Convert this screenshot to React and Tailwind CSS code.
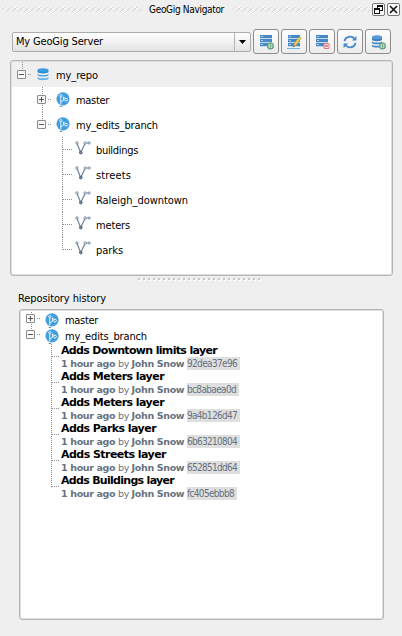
import React, { useLayoutEffect, useRef } from "react";

// Single-line label whose letter spacing is adjusted to fill the width `w`.
function Label({ w, className = "", children }) {
  const ref = useRef(null);
  useLayoutEffect(() => {
    const el = ref.current;
    el.style.letterSpacing = "0px";
    const natural = el.getBoundingClientRect().width;
    el.style.letterSpacing = (w - natural) / el.textContent.length + "px";
  }, [w]);
  return (
    <span ref={ref} className={"inline-block shrink-0 whitespace-pre " + className}>
      {children}
    </span>
  );
}

function Grip({ w, id }) {
  return (
    <svg width={w} height="6" className="shrink-0" shapeRendering="crispEdges">
      <defs>
        <pattern id={id} width="6" height="6" patternUnits="userSpaceOnUse">
          <path d="M0 0h2v2H0zM3 3h2v2H3z" fill="#fff" />
          <path d="M0 1h1v1H0zM1 0h1v1H1zM3 4h1v1H3zM4 3h1v1H4zM5 2h1v1H5z" fill="#cdcdcd" />
        </pattern>
      </defs>
      <rect width={w} height="6" fill={`url(#${id})`} />
    </svg>
  );
}

function Splitter() {
  return (
    <svg width="124" height="4" shapeRendering="crispEdges">
      {Array.from({ length: 25 }, (_, i) => (
        <g key={i}>
          <rect x={i * 5 + 1} y="1" width="2" height="2" fill="#fff" />
          <rect x={i * 5} y="0" width="2" height="2" fill="#c4c4c4" />
        </g>
      ))}
    </svg>
  );
}

const dots = { stroke: "#8f8f8f", strokeDasharray: "1 1", shapeRendering: "crispEdges", fill: "none" };

// Gutter of one tree row: dotted connectors and an optional expander box.
function Gutter({ w, h, cx, cy, end, top = true, bottom, box }) {
  return (
    <svg width={w} height={h} className="shrink-0">
      {top && <path d={`M${cx + 0.5} 0V${box ? cy - 4 : cy + 1}`} {...dots} />}
      {bottom && <path d={`M${cx + 0.5} ${cy + (box ? 6 : 0)}V${h}`} {...dots} />}
      <path d={`M${cx + (box ? 6 : 1)} ${cy + 0.5}H${end}`} {...dots} />
      {box && (
        <g fill="none" stroke="#8c8c8c">
          <rect x={cx - 4.5} y={cy - 3.5} width="8" height="8" rx="0.5" fill="#f8f8f8" />
          <path d={`M${cx - 3} ${cy + 0.5}h5`} stroke="#555" />
          {box === "+" && <path d={`M${cx - 0.5} ${cy - 2}v5`} stroke="#555" />}
        </g>
      )}
    </svg>
  );
}

function BranchIcon() {
  return (
    <svg width="14" height="15" viewBox="0 0 14 15" className="shrink-0">
      <circle cx="7" cy="6.8" r="6.6" fill="#419fdd" />
      <g fill="none" stroke="#e4f2fb" strokeWidth="1">
        <circle cx="4.8" cy="3.7" r="1.1" />
        <circle cx="10" cy="7.6" r="1.4" />
        <path d="M4.8 4.8v7.7M5 9.8l2.5-1.5V4.8M7.5 4.8l1.4 1.7" />
      </g>
      <path d="M3.6 14.3h2.6" stroke="#4b6c84" strokeWidth="0.9" />
    </svg>
  );
}

function RepoIcon() {
  return (
    <svg width="12" height="13" viewBox="0 0 12 13" className="shrink-0">
      <path d="M.5 2.2v1.6c0 2.2 11 2.2 11 0V2.2z" fill="#2e8bd0" />
      <ellipse cx="6" cy="2.1" rx="5.5" ry="1.9" fill="#3c9ce0" />
      <path d="M.5 5.4c0 2 11 2 11 0v1.7c0 2-11 2-11 0z" fill="#4ca5e3" />
      <path d="M.5 8.8c0 2 11 2 11 0v1.7c0 2.2-11 2.2-11 0z" fill="#65b1e6" />
    </svg>
  );
}

function LayerIcon() {
  return (
    <svg width="16" height="14" viewBox="0 0 16 14" className="shrink-0" fill="none" stroke="#718499">
      <path d="M2.2 2.8l3.3 8.4M6 11l3.8-8M11.5 2h2" strokeWidth="1.2" />
      <circle cx="1.9" cy="1.9" r="1.2" strokeWidth=".9" />
      <circle cx="10.2" cy="2" r="1.2" strokeWidth=".9" />
      <circle cx="14.2" cy="2" r="1.1" strokeWidth=".9" />
      <circle cx="5.8" cy="11.6" r="1.3" fill="#7f90a2" stroke="#465c75" />
    </svg>
  );
}

function Server() {
  return (
    <g>
      <path d="M1 0h12v3H1zM1 4h12v3H1zM1 8h12v3H1z" fill="#4788c6" />
      <path d="M1 3.5h12M1 7.5h12M1 11.5h12" stroke="#c4d9ee" />
      <path d="M2 1.5h2M2 5.5h2M2 9.5h2" stroke="#a9cdec" />
    </g>
  );
}

function Plus() {
  return (
    <g>
      <circle cx="11.5" cy="11" r="2.8" fill="#f4faf5" stroke="#64a277" strokeWidth="1.4" />
      <path d="M9.7 11h3.6M11.5 9.2v3.6" stroke="#6fae83" strokeWidth="1" />
    </g>
  );
}

const toolIcons = [
  <><Server /><Plus /></>,
  <>
    <Server />
    <path d="M0 13.5h13" stroke="#6eb4e9" />
    <path d="M6 12l1-3 5.2-7.2 2 1.4L9 10.4z" fill="#f2cf50" stroke="#a98d3d" strokeWidth=".6" />
    <path d="M6 12l.6-1.8 1.2.9z" fill="#444" />
  </>,
  <>
    <Server />
    <rect x="9" y="8.5" width="5" height="5" rx=".5" fill="#fff2f1" stroke="#e07577" />
    <path d="M10.2 9.7l2.6 2.6M12.8 9.7l-2.6 2.6" stroke="#d83e45" />
  </>,
  <g fill="none" stroke="#4589ca" strokeWidth="1.8">
    <path d="M1.5 6.2C2.2 1.5 8.4-.1 11.5 3.7M12.5 7.8C11.8 12.5 5.6 14.1 2.5 10.3" />
    <path d="M13.4 1v4.6H8.8zM.6 13V8.4h4.6z" fill="#4589ca" stroke="none" />
  </g>,
  <>
    <path d="M1 2.4v2c0 2.3 10 2.3 10 0v-2z" fill="#3b78b4" />
    <ellipse cx="6" cy="2.3" rx="5" ry="2" fill="#559bd9" />
    <path d="M1 6c0 2 10 2 10 0v1.8c0 2-10 2-10 0z" fill="#4788c6" />
    <path d="M1 9.3c0 2 10 2 10 0v1.6c0 2.2-10 2.2-10 0z" fill="#4788c6" />
    <Plus />
  </>,
];

const layers = [
  ["buildings", 42],
  ["streets", 35],
  ["Raleigh_downtown", 92],
  ["meters", 34],
  ["parks", 27],
];

const commits = [
  ["Adds Downtown limits layer", 156, "92dea37e96", 50],
  ["Adds Meters layer", 103, "bc8abaea0d", 49],
  ["Adds Meters layer", 103, "9a4b126d47", 50],
  ["Adds Parks layer", 95, "6b63210804", 50],
  ["Adds Streets layer", 105, "652851dd64", 50],
  ["Adds Buildings layer", 113, "fc405ebbb8", 47],
];

const panel = "flex flex-col rounded-[3px] border border-[#b5b5b5] bg-white shadow-[inset_0_0_0_1px_#dedede]";

export default function App() {
  return (
    <div className="flex h-[636px] w-[402px] flex-col overflow-hidden bg-[#efefef] font-['DejaVu_Sans_Condensed','DejaVu_Sans',sans-serif] text-[11px] leading-[14px] text-black [font-stretch:condensed]">
      <header className="flex h-[20px] shrink-0 items-center pl-[3px]">
        <Grip w={138} id="gripLeft" />
        <Label w={75} className="ml-[8px] text-[10px]">GeoGig Navigator</Label>
        <div className="ml-[9px] flex"><Grip w={137} id="gripRight" /></div>
        <button className="ml-[2px] mb-[2px] flex h-[13px] w-[13px] items-center justify-center rounded-[2px] border border-[#777] bg-[#f8f8f8]">
          <svg width="9" height="9" viewBox="0 0 9 9" fill="none" stroke="#111" shapeRendering="crispEdges" className="shrink-0">
            <path d="M3 .5h6M3 1.5h6M3.5 1v2M8.5 1v5M9 5.5H6M0 3.5h6M0 4.5h6M.5 4v5M5.5 4v5M0 8.5h6" />
          </svg>
        </button>
        <button className="ml-[2px] mb-[2px] flex h-[13px] w-[13px] items-center justify-center rounded-[2px] border border-[#777] bg-[#f8f8f8]">
          <svg width="9" height="9" viewBox="0 0 9 9" stroke="#111" strokeWidth="1.6" className="shrink-0">
            <path d="M1 1l7 7M8 1L1 8" />
          </svg>
        </button>
      </header>

      <div className="mt-[9px] flex h-[25px] shrink-0 items-center pl-[12px]">
        <div className="flex h-[20px] w-[239px] shrink-0 rounded-[2px] border border-[#acacac] bg-linear-to-b from-white to-[#e3e3e3]">
          <div className="flex flex-1 items-center pl-[3px]">
            <Label w={87}>My GeoGig Server</Label>
          </div>
          <div className="flex w-[16px] items-center justify-center border-l border-[#b5b5b5]">
            <svg width="7" height="4" viewBox="0 0 7 4"><path d="M0 0h7L3.5 4z" /></svg>
          </div>
        </div>
        <div className="ml-[2px] flex gap-[2px]">
          {toolIcons.map((icon, i) => (
            <button key={i} className="flex h-[25px] w-[26px] items-center justify-center rounded-[3px] border border-[#8d8d8d] bg-linear-to-b from-[#fcfcfc] to-[#ececec]">
              <svg width="14" height="14" viewBox="0 0 14 14" className="shrink-0 overflow-visible">{icon}</svg>
            </button>
          ))}
        </div>
      </div>

      <section className={panel + " ml-[10px] mt-[6px] h-[216px] w-[383px] shrink-0 p-px"}>
        <div className="flex h-[25px] shrink-0 items-center bg-[#efefef]">
          <Gutter w={25} h={25} cx={10} cy={12} end={20} box="-" />
          <RepoIcon />
          <Label w={42} className="ml-[7px] pt-[2px]">my_repo</Label>
        </div>
        <div className="flex h-[25px] shrink-0 items-center">
          <Gutter w={44} h={25} cx={30} cy={12} end={40} box="+" bottom />
          <BranchIcon />
          <Label w={33} className="ml-[6px] pt-[2px]">master</Label>
        </div>
        <div className="flex h-[25px] shrink-0 items-center">
          <Gutter w={44} h={25} cx={30} cy={12} end={40} box="-" />
          <BranchIcon />
          <Label w={82} className="ml-[6px] pt-[2px]">my_edits_branch</Label>
        </div>
        {layers.map(([name, w], i) => (
          <div key={name} className="flex h-[25px] shrink-0 items-center">
            <Gutter w={63} h={25} cx={50} cy={12} end={60} bottom={i < layers.length - 1} />
            <div className="mb-[4px] flex"><LayerIcon /></div>
            <Label w={w} className="ml-[5px] pt-[2px]">{name}</Label>
          </div>
        ))}
      </section>

      <div className="mt-[2px] flex h-[4px] shrink-0 pl-[138px]"><Splitter /></div>

      <div className="mt-[10px] flex h-[14px] shrink-0 pl-[18px]">
        <Label w={88}>Repository history</Label>
      </div>

      <section className={panel + " ml-[19px] mt-[3px] h-[311px] w-[365px] shrink-0 px-px pt-[2px]"}>
        <div className="flex h-[16px] shrink-0 items-center">
          <Gutter w={24} h={16} cx={10} cy={6} end={20} box="+" bottom />
          <BranchIcon />
          <Label w={33} className="ml-[6px] pt-[2px]">master</Label>
        </div>
        <div className="flex h-[16px] shrink-0 items-center">
          <Gutter w={24} h={16} cx={10} cy={6} end={20} box="-" />
          <BranchIcon />
          <Label w={82} className="ml-[6px] pt-[2px]">my_edits_branch</Label>
        </div>
        {commits.map(([title, tw, hash, hw], i) => (
          <div key={i} className="flex h-[26px] shrink-0">
            <Gutter w={40} h={26} cx={30} cy={12} end={39} bottom={i < commits.length - 1} />
            <div className="flex flex-col">
              <Label w={tw} className="h-[13px] self-start font-['DejaVu_Sans'] text-[11px] font-bold leading-[13px] [font-stretch:normal]">{title}</Label>
              <div className="flex h-[13px] items-center font-['DejaVu_Sans'] text-[9.5px] leading-[13px] text-[#66727e] [font-stretch:normal]">
                <Label w={126}><b>1 hour ago</b> by <b>John Snow</b> </Label>
                <span className="flex h-[13px] bg-[#dfdfdf] pr-[3px] font-['DejaVu_Sans_Condensed'] text-[10px] [font-stretch:condensed]"><Label w={hw}>{hash}</Label></span>
              </div>
            </div>
          </div>
        ))}
      </section>
    </div>
  );
}
